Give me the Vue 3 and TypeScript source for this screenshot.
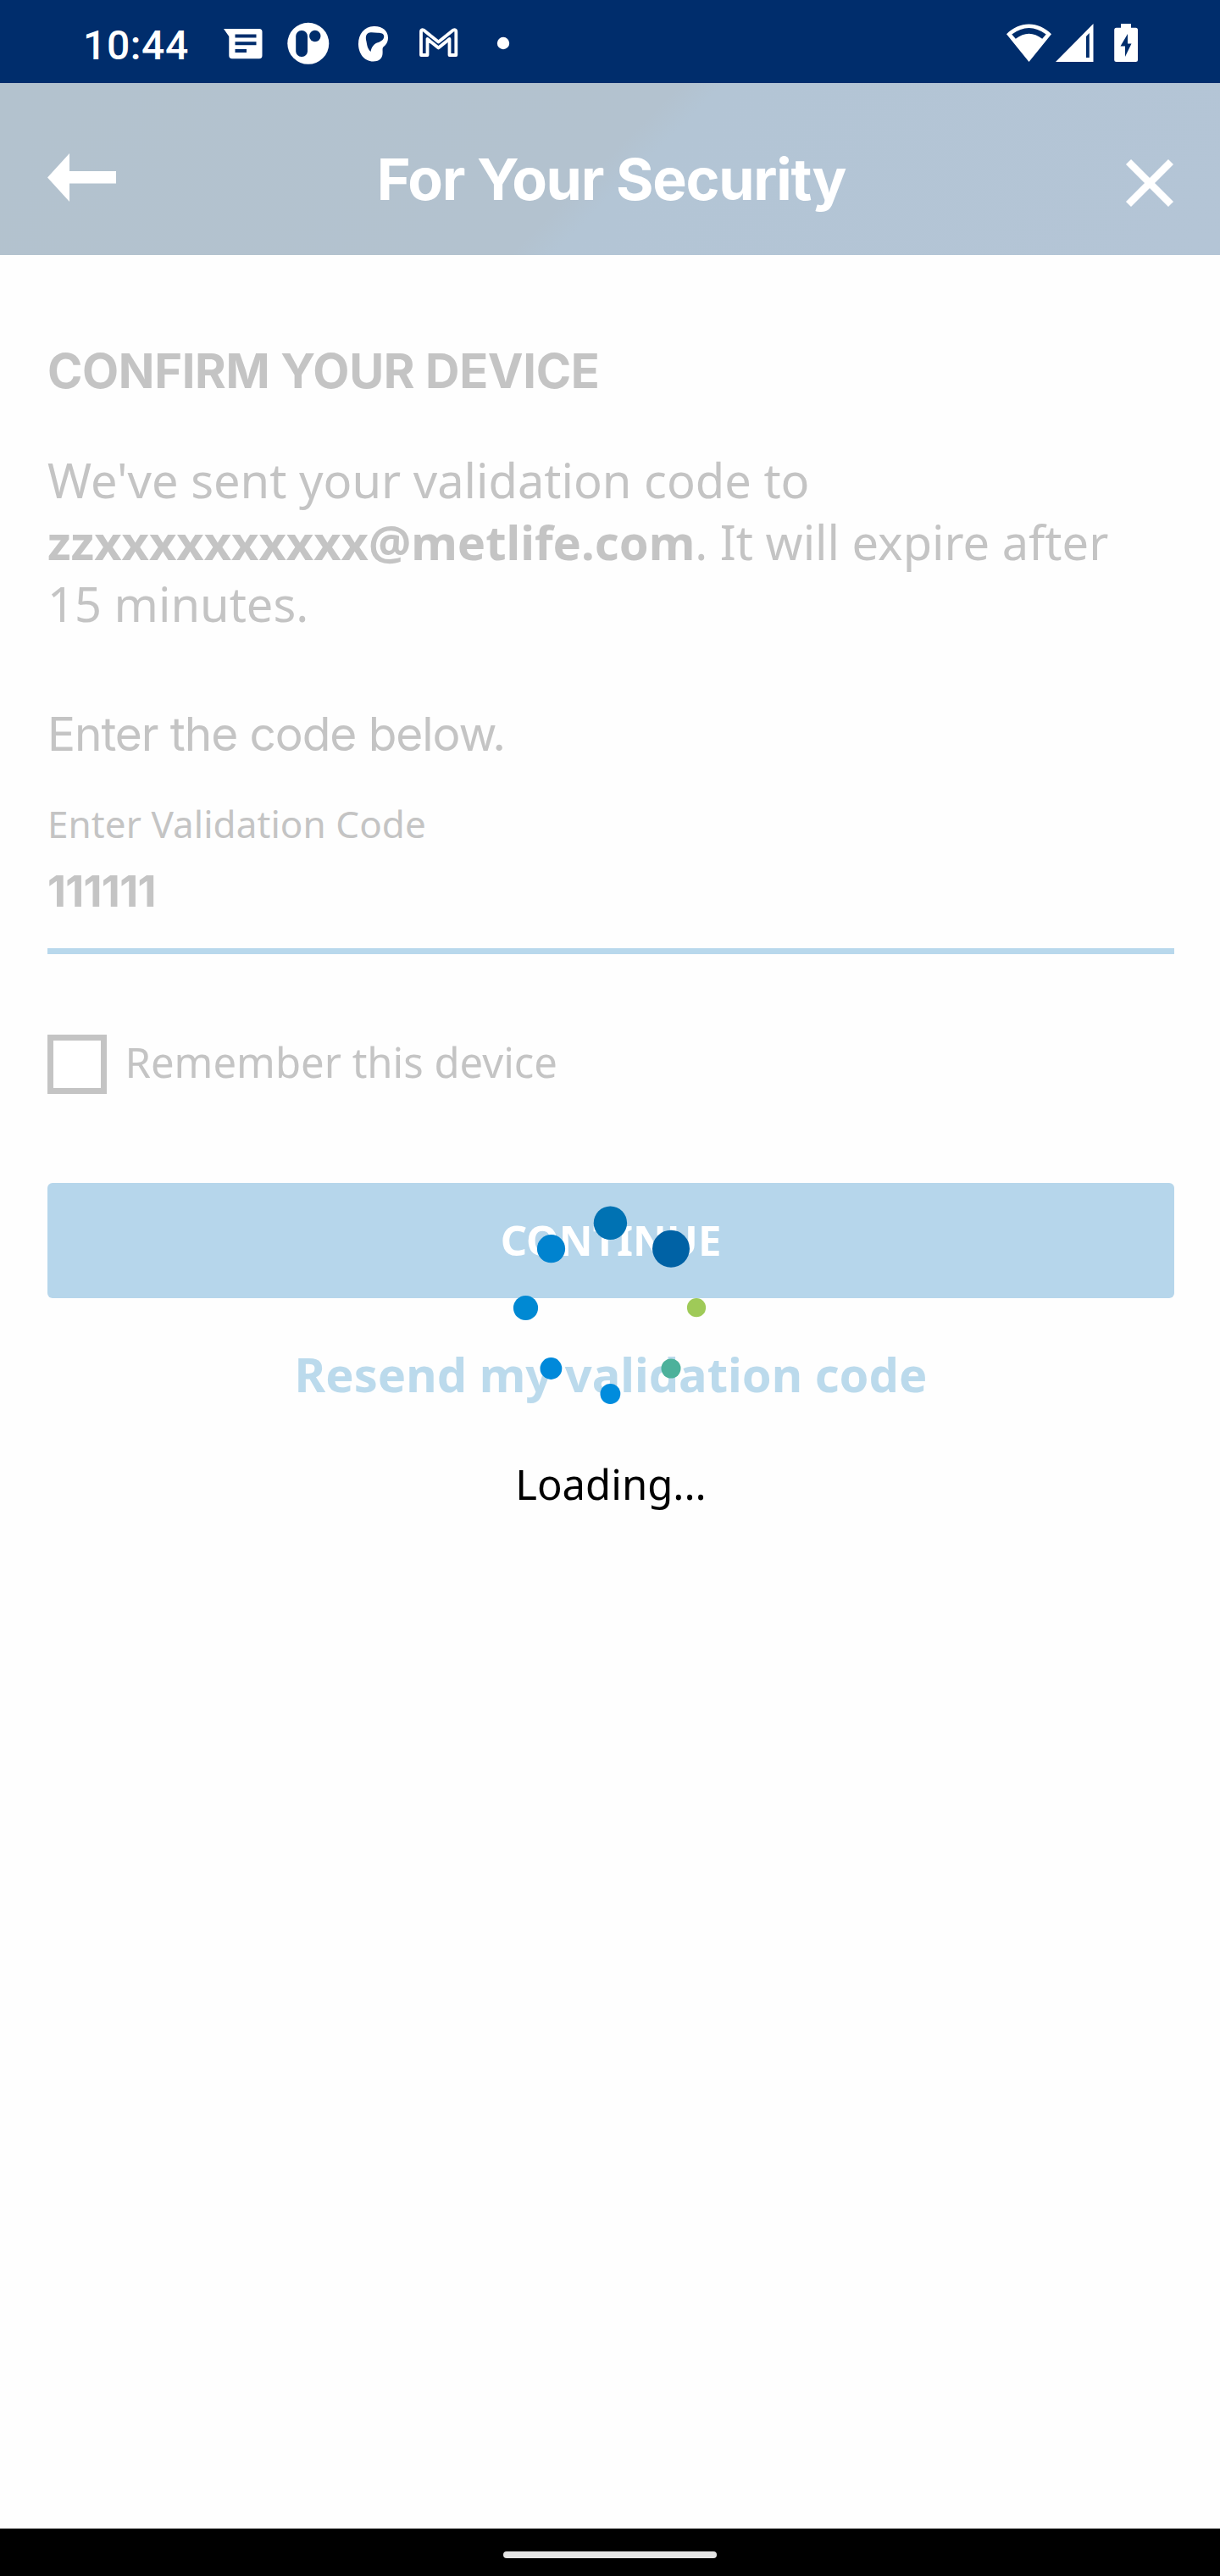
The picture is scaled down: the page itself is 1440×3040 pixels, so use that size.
<script setup lang="ts">
import { ref } from 'vue'

interface Dot {
  x: number
  y: number
  r: number
  color: string
}

const email = 'zzxxxxxxxxxx@metlife.com'
const code = ref('111111')

const dots: Dot[] = [
  { x: 120.4, y: 23.3, r: 19.7, color: '#0072b3' },
  { x: 192, y: 53.7, r: 22, color: '#0062a5' },
  { x: 222, y: 123.2, r: 11.1, color: '#9fca58' },
  { x: 192, y: 195, r: 11.5, color: '#4cb19b' },
  { x: 120.4, y: 225, r: 11.9, color: '#008cdd' },
  { x: 50.4, y: 195, r: 12.9, color: '#0089da' },
  { x: 20.5, y: 123.5, r: 14.6, color: '#0089d3' },
  { x: 50.5, y: 53.7, r: 16.6, color: '#0083cf' },
]
</script>

<template>
  <div class="screen">
    <div class="status">
      <span class="time">10:44</span>
      <svg class="messages" width="46" height="98" viewBox="264 0 46 98">
        <path fill="#fff" fill-rule="evenodd" d="M264 34H306Q309.500 34 309.500 37.500V65.500Q309.500 69.300 306 69.300H274Q270.300 69.300 270.300 65.500V43ZM277.500 40.500V44.500H302.500V40.500ZM277.500 49.300V53.300H302.500V49.300ZM277.500 58V62H291V58Z" />
      </svg>
      <svg class="badge" width="50" height="98" viewBox="338.500 0 50 98">
        <circle cx="363.300" cy="51.300" r="24.500" fill="#fff" />
        <rect x="348.700" y="36" width="13.800" height="31" rx="6.500" fill="#002d6c" />
        <circle cx="371.300" cy="42.500" r="6.700" fill="#002d6c" />
      </svg>
      <svg class="face" width="36" height="98" viewBox="423 0 36 98">
        <path fill="#fff" fill-rule="evenodd" d="M441 31C451 30.500 458 36 458 44.500C458 50 455.500 53 452 56C451 58 452 60 451.500 64C451 69 447 72.500 440.500 72.500C430 72.500 423 63 423 52C423 40 430 31.500 441 31ZM434 39.500C431.500 41.500 431.500 45 432.500 49C433.300 53 433.500 57 437.500 61C438.500 56 440.500 52.500 445 50.500C450 49 453.500 46.500 453.200 42.500C452.800 39.500 450 38.700 446 38.700C441 38.700 437 37.500 434 39.500Z" />
      </svg>
      <svg class="mail" width="47" height="98" viewBox="493.500 0 47 98">
        <path fill="none" stroke="#fff" stroke-width="3.800" stroke-linejoin="round" d="M496.500 37Q496.500 34.500 499.500 35.500L517 49.500L534.500 35.500Q537.800 34.500 537.800 37V65H530V46L517 56.500L504 46V65H496.500Z" />
      </svg>
      <svg class="more" width="16" height="98" viewBox="586 0 16 98">
        <circle cx="594" cy="51" r="7.200" fill="#fff" />
      </svg>
      <div class="spacer"></div>
      <svg width="54" height="98" viewBox="1188 0 54 98">
        <path fill="#fff" fill-rule="evenodd" d="M1188 40.300C1203 24.500 1226 24.500 1241 40.300L1214.500 73ZM1194.300 40.500L1198.800 45.800Q1214.500 33.500 1230.200 45.800L1234.700 40.500Q1214.500 25.500 1194.300 40.500Z" />
      </svg>
      <svg class="signal" width="45" height="98" viewBox="1245.500 0 45 98">
        <path fill="#fff" fill-rule="evenodd" d="M1290 28V73H1245.500ZM1285.300 39L1281.500 43V68H1285.300Z" />
      </svg>
      <svg class="battery" width="28" height="98" viewBox="1314.500 0 28 98">
        <path fill="#fff" fill-rule="evenodd" d="M1322.500 28H1334.500V32.700H1340Q1342.500 32.700 1342.500 35.200V70.500Q1342.500 73 1340 73H1317.200Q1314.700 73 1314.700 70.500V35.200Q1314.700 32.700 1317.200 32.700H1322.500ZM1330.500 40L1322 54.500H1327.500V67L1335 51.500H1330.500Z" />
      </svg>
    </div>

    <header class="bar">
      <svg class="back" width="82" height="58" viewBox="0 0 82 58">
        <path fill="#fff" d="M0 28.500L26 0V21H81V35.500H26V57Z" />
      </svg>
      <h1 class="title">For Your Security</h1>
      <svg class="close" width="82" height="56" viewBox="0 0 82 56">
        <path stroke="#fff" stroke-width="8.500" d="M29 3L79 53M79 3L29 53" />
      </svg>
    </header>

    <main class="content">
      <h2 class="heading">CONFIRM YOUR DEVICE</h2>
      <p class="message">
        We've sent your validation code to<br /><b>{{ email }}</b>. It will expire after<br />15 minutes.
      </p>
      <p class="prompt">Enter the code below.</p>
      <div class="field">
        <div class="label">Enter Validation Code</div>
        <div class="value">{{ code }}</div>
      </div>
      <div class="remember">
        <span class="box"></span>
        <span class="remember-text">Remember this device</span>
      </div>
      <div class="continue">CONTINUE</div>
      <div class="resend">Resend my validation code</div>
    </main>

    <div class="loader">
      <svg width="240" height="240" viewBox="0 0 240 240">
        <circle v-for="(d, i) in dots" :key="i" :cx="d.x" :cy="d.y" :r="d.r" :fill="d.color" />
      </svg>
      <div class="loading">Loading...</div>
    </div>

    <div class="nav"><span class="pill"></span></div>
  </div>
</template>

<style scoped>
.screen {
  position: relative;
  display: flex;
  flex-direction: column;
  width: 1440px;
  height: 3040px;
  overflow: hidden;
  background: #fefefe;
  font-family: "Noto Sans", sans-serif;
  color: #c4c4c4;
}
svg {
  display: block;
  flex: none;
  overflow: visible;
}

.status {
  display: flex;
  flex: none;
  height: 98px;
  box-sizing: border-box;
  padding: 0 97.500px 0 98px;
  background: #002d6c;
}
.time {
  width: 166px;
  color: #fff;
  font: 500 48px/107px Roboto, sans-serif;
  letter-spacing: 0.600px;
}
.badge { margin-left: 28.500px; }
.face { margin-left: 34.500px; }
.mail { margin-left: 34.500px; }
.more { margin-left: 45.500px; }
.spacer { flex: 1; }
.signal { margin-left: 3.500px; }
.battery { margin-left: 24px; }

.bar {
  display: flex;
  flex: none;
  align-items: flex-start;
  height: 203px;
  box-sizing: border-box;
  padding: 0 55px 0 56px;
  background: linear-gradient(135deg, #b3c2ce 0%, #b3c2cf 49%, #b3c5d5 52%, #b4c5d6 100%);
}
.back { margin-top: 83px; }
.close { margin-top: 90px; }
.title {
  flex: 1;
  margin: 0;
  padding-left: 2px;
  color: #fff;
  font: 700 68px/227px Inter, sans-serif;
  letter-spacing: -1.250px;
  text-align: center;
}

.content {
  flex: 1;
  padding: 107px 54px 0 56px;
}
.heading {
  margin: 0;
  font: 650 56px/60px Inter, sans-serif;
  letter-spacing: -0.360px;
}
.message {
  margin: 62px 0 0;
  font-size: 56px;
  line-height: 73px;
  white-space: nowrap;
}
.message b {
  font-weight: 700;
}
.prompt {
  margin: 87px 0 0;
  font: 400 55px/60px Inter, sans-serif;
  letter-spacing: -1.080px;
}
.field {
  margin-top: 51px;
  padding-bottom: 39px;
  border-bottom: 7px solid #b8d8ec;
}
.label {
  font-size: 44px;
  line-height: 50px;
  letter-spacing: 0.070px;
}
.value {
  margin-top: 27px;
  font: 700 51px/56px Inter, sans-serif;
  letter-spacing: -0.700px;
}
.remember {
  display: flex;
  align-items: flex-start;
  height: 70px;
  margin-top: 95px;
}
.box {
  width: 70px;
  height: 70px;
  box-sizing: border-box;
  border: 7px solid #c4c4c4;
  background: #fff;
}
.remember-text {
  margin-left: 21.500px;
  font-size: 49px;
  line-height: 64px;
}
.continue {
  height: 136px;
  margin-top: 105px;
  border-radius: 6px;
  background: #b6d6eb;
  color: #fff;
  font-size: 49px;
  font-weight: 700;
  line-height: 134px;
  text-align: center;
}
.resend {
  margin-top: 51px;
  color: #bbdaec;
  font-size: 56px;
  font-weight: 700;
  line-height: 76px;
  text-align: center;
}

/* Spinner floats over the dimmed form */
.loader {
  position: absolute;
  top: 1420px;
  left: 600px;
  width: 240px;
}
.loading {
  margin-top: 58px;
  padding-left: 2px;
  color: #000;
  font-size: 49px;
  line-height: 66px;
  text-align: center;
}

.nav {
  display: flex;
  flex: none;
  justify-content: center;
  height: 56px;
  background: #000;
}
.pill {
  width: 252px;
  height: 8px;
  margin-top: 27px;
  border-radius: 4px;
  background: #e5e5e5;
}
</style>

<style>
body {
  margin: 0;
}
</style>
